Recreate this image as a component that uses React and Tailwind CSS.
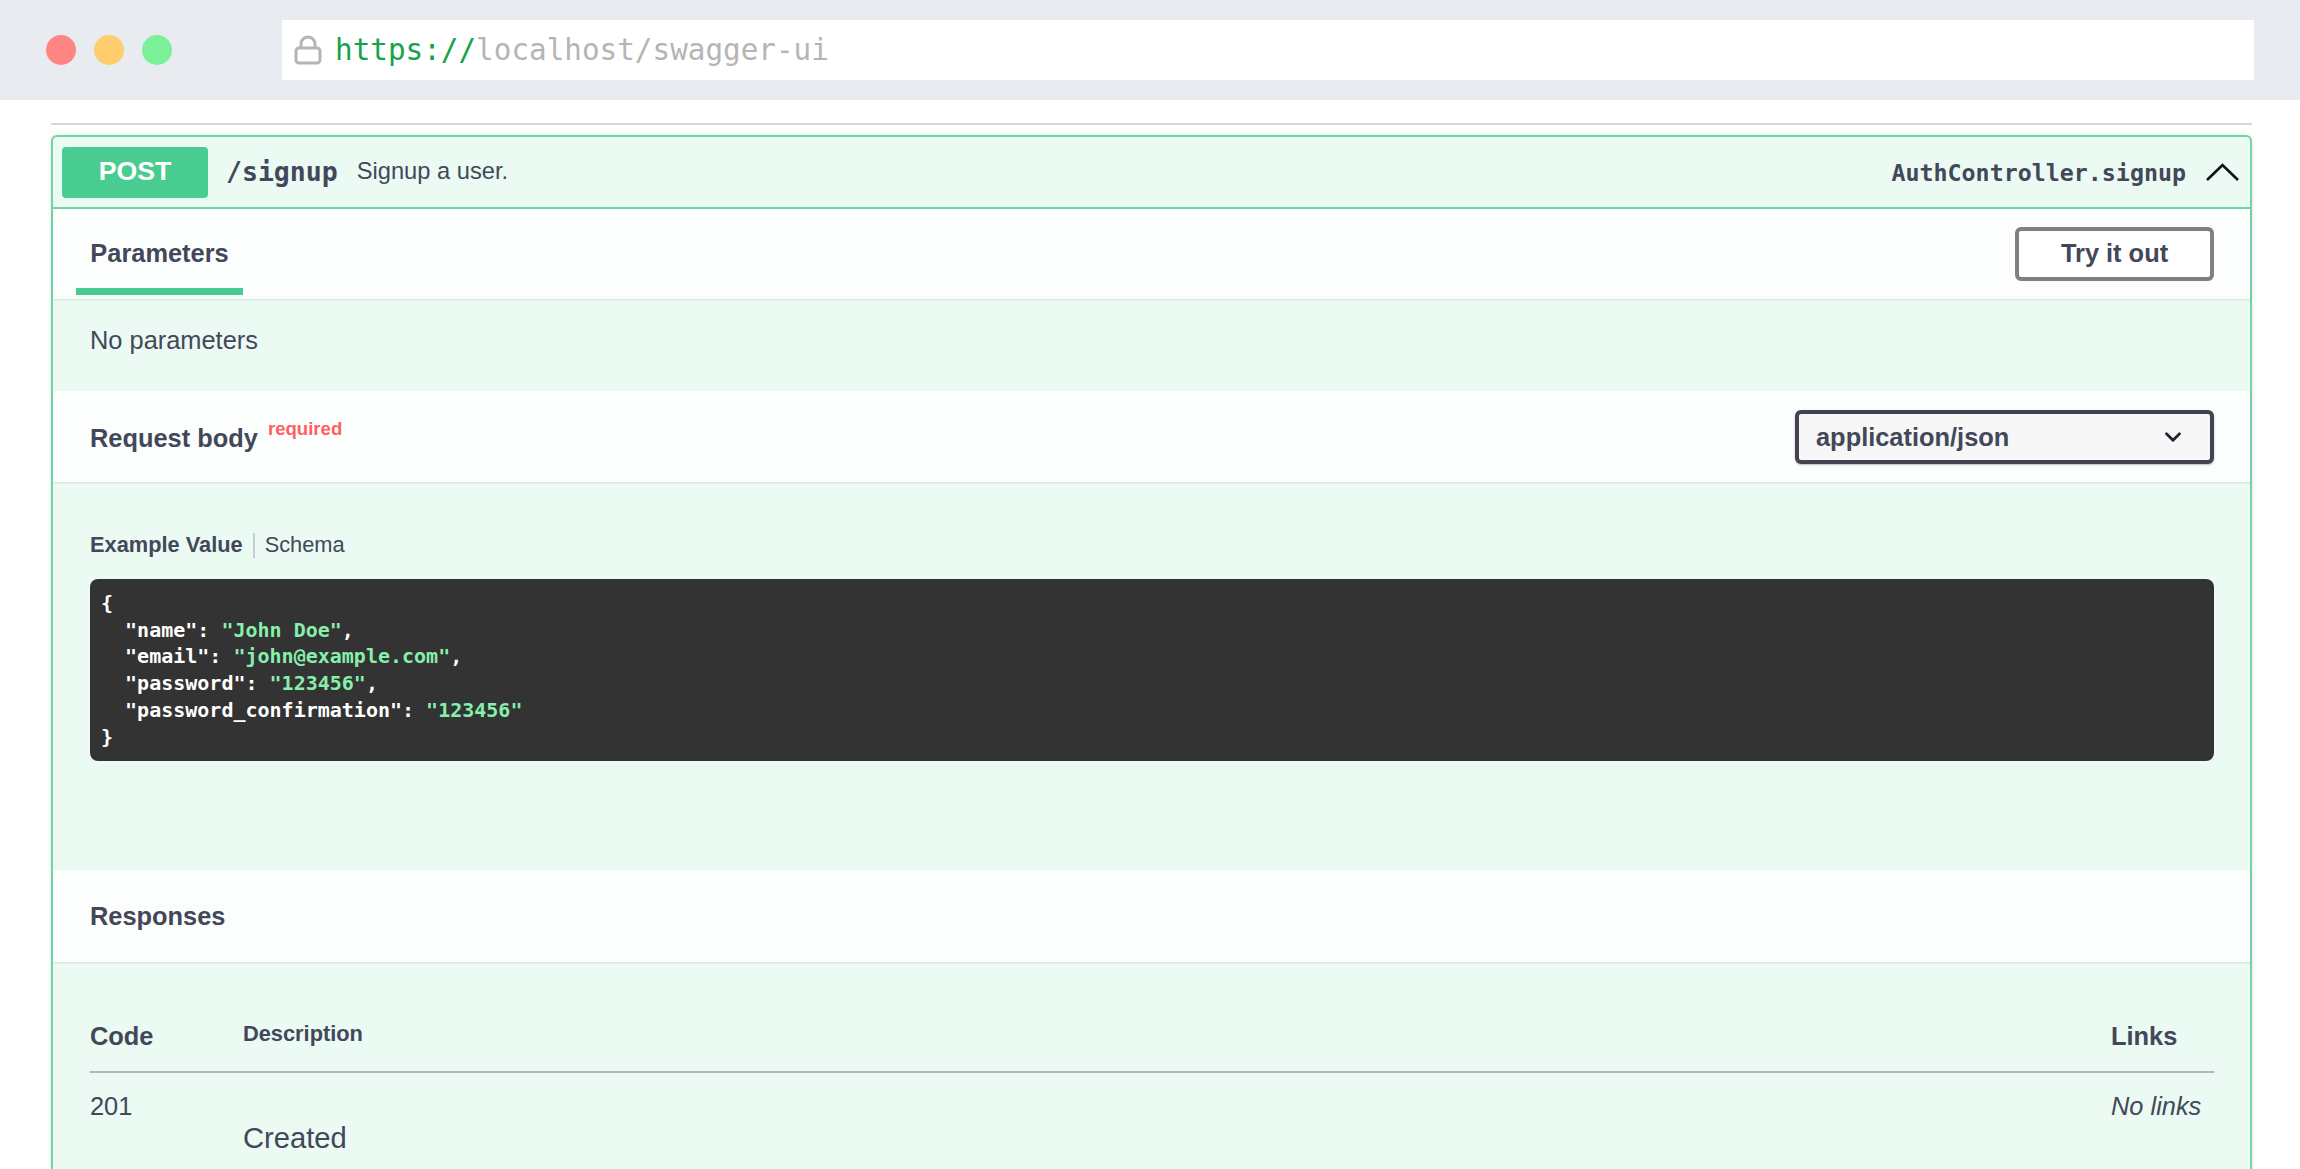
import React from 'react';
import { ChevronDown } from 'lucide-react';

const sans = "font-['Liberation_Sans',Arial,sans-serif]";
const mono = "font-['DejaVu_Sans_Mono',monospace]";

const SectionHeader = ({ className = '', children }) => (
  <div className={`flex items-center justify-between bg-[#fcfefd] shadow-[0_1px_2px_rgba(0,0,0,0.1)] ${className}`}>
    {children}
  </div>
);

const Str = ({ children }) => <span className="text-[#86efac]">{children}</span>;

const App = () => {
  return (
    <div className={`h-screen overflow-hidden bg-white text-[#424859] ${sans}`}>
      {/* Browser bar */}
      <div className="flex h-[100px] items-center bg-[#e8ecf0] pl-[46px] pr-[46px]">
        <div className="flex gap-[18px]">
          <div className="h-[30px] w-[30px] rounded-full bg-[#ff8585]"></div>
          <div className="h-[30px] w-[30px] rounded-full bg-[#ffcd6c]"></div>
          <div className="h-[30px] w-[30px] rounded-full bg-[#7bf197]"></div>
        </div>
        <div className="ml-[110px] flex h-[60px] flex-1 items-center bg-white pl-[12px]">
          <svg width="28" height="30" viewBox="0 0 28 30" fill="none" stroke="#b5b5b5" strokeWidth="3">
            <rect x="2" y="13" width="24" height="15" rx="3" />
            <path d="M7 13V9a7 7 0 0 1 14 0v4" />
          </svg>
          <span className={`ml-[13px] pt-[2px] text-[29.3px] ${mono}`}>
            <span className="text-[#16a34a]">https://</span>
            <span className="text-[#b5b5b5]">localhost/swagger-ui</span>
          </span>
        </div>
      </div>

      <div className="pl-[51px] pr-[48px] pt-[23px]">
        <div className="h-[2px] bg-[#d8d8d8]"></div>

        <div className="mt-[10px] h-[1200px] rounded-[6px] border-2 border-[#6fd6a6] bg-[#ebfaf3] shadow-[0_0_4px_rgba(0,0,0,0.12)]">
          {/* Summary */}
          <div className="flex h-[72px] items-center border-b-2 border-[#6fd6a6] pl-[9px] pr-[11px]">
            <div className="flex h-[51px] w-[146px] items-center justify-center rounded-[4px] bg-[#49cc90] pb-[1px] text-[26.7px] font-bold text-white">
              POST
            </div>
            <span className={`ml-[18px] text-[26.5px] font-bold ${mono}`}>/signup</span>
            <span className="ml-[19px] text-[23.7px]">Signup a user.</span>
            <span className={`ml-auto pt-[2px] text-[23.3px] font-bold ${mono}`}>AuthController.signup</span>
            <svg width="33" height="18" viewBox="0 0 33 18" fill="none" stroke="#111111" strokeWidth="2.6" className="ml-[20px]">
              <path d="M1 17 16.5 2 32 17" />
            </svg>
          </div>

          {/* Parameters */}
          <SectionHeader className="h-[90px] pl-[23px] pr-[36px]">
            <div className="flex h-full w-[167px] flex-col items-center justify-end pb-[4px]">
              <span className="mb-[16px] text-[25.4px] font-bold">Parameters</span>
              <div className="h-[7px] w-full bg-[#49cc90]"></div>
            </div>
            <button className="h-[54px] w-[199px] rounded-[6px] border-4 border-[#808080] bg-white pb-[2px] text-[25.4px] font-bold">
              Try it out
            </button>
          </SectionHeader>
          <div className="flex h-[92px] items-center pb-[10px] pl-[37px] text-[25.4px]">No parameters</div>

          {/* Request body */}
          <SectionHeader className="h-[91px] pl-[37px] pr-[36px]">
            <div className="flex items-start pt-[3px] text-[25.4px] font-bold">
              Request body
              <span className="ml-[10px] text-[18.6px] leading-[20px] text-[#ff6060]">required</span>
            </div>
            <div className="flex h-[54px] w-[419px] items-center justify-between rounded-[6px] border-4 border-[#41444e] bg-[#f7f7f7] pl-[17px] pr-[24px] pt-[1px] text-[25.4px] font-bold shadow-[0_1px_2px_rgba(0,0,0,0.25)]">
              application/json
              <ChevronDown size={26} strokeWidth={2.6} className="text-[#1f2430]" />
            </div>
          </SectionHeader>

          <div className="h-[388px] pl-[37px] pr-[36px] pt-[51px]">
            <div className="flex h-[25px] items-center text-[21.8px]">
              <span className="font-bold">Example Value</span>
              <span className="mx-[10px] h-[25px] w-[2px] bg-[#c8cdd0]"></span>
              <span>Schema</span>
            </div>
            <div className={`mt-[21px] h-[182px] rounded-[8px] bg-[#333333] pl-[11px] pt-[11px] text-[20px] font-bold leading-[26.7px] whitespace-pre text-white ${mono}`}>
              <div>{'{'}</div>
              <div>{'  "name": '}<Str>"John Doe"</Str>,</div>
              <div>{'  "email": '}<Str>"john@example.com"</Str>,</div>
              <div>{'  "password": '}<Str>"123456"</Str>,</div>
              <div>{'  "password_confirmation": '}<Str>"123456"</Str></div>
              <div>{'}'}</div>
            </div>
          </div>

          {/* Responses */}
          <SectionHeader className="h-[92px] pl-[37px] text-[25.4px] font-bold">Responses</SectionHeader>

          <div className="pl-[37px] pr-[36px] pt-[55px]">
            <div className="flex h-[56px] items-start border-b-2 border-[#b4b9c0] font-bold">
              <span className="w-[153px] text-[25.4px]">Code</span>
              <span className="flex-1 pt-[1px] text-[21.8px]">Description</span>
              <span className="w-[103px] text-[25.4px]">Links</span>
            </div>
            <div className="flex pt-[14px]">
              <span className="w-[153px] text-[25.4px]">201</span>
              <span className="flex-1 pt-[30px] text-[29.2px]">Created</span>
              <span className="w-[103px] text-[25.4px] italic">No links</span>
            </div>
          </div>
        </div>
      </div>
    </div>
  );
};

export default App;
